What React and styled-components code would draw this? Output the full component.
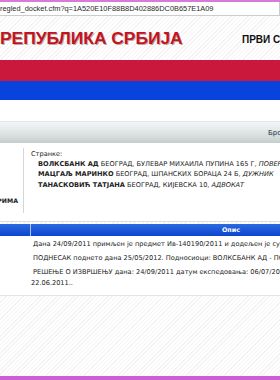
import React from 'react';
import styled, { createGlobalStyle } from 'styled-components';

const Global = createGlobalStyle`
	html, body { margin: 0; padding: 0; background: #fff; }
	body { font-family: "DejaVu Sans", Verdana, sans-serif; }
`;

const Frame = styled.div`
	width: 280px;
	height: 380px;
	overflow: hidden;
	display: flex;
	flex-direction: column;
	border-top: 2px solid #d77ad8;
	border-bottom: 4px solid #cc5fd3;
	box-sizing: border-box;
	background: repeating-linear-gradient(135deg, #ffffff 0 2px, #f3f3f3 2px 3px);
`;

const AddressBar = styled.div`
	height: 13px;
	flex: none;
	background: #fff;
	border-bottom: 1px solid #c9cdd2;
	border-right: 1px solid #c9cdd2;
	font-family: "Liberation Sans", Arial, sans-serif;
	font-size: 7.4px;
	line-height: 13px;
	color: #2a2a2a;
	white-space: nowrap;
	overflow: hidden;
`;

const Header = styled.div`
	height: 44px;
	flex: none;
	display: flex;
	align-items: center;
	justify-content: space-between;
	white-space: nowrap;
	overflow: hidden;
`;

const Title = styled.div`
	font-family: "Liberation Sans", Arial, sans-serif;
	font-weight: bold;
	font-size: 17.4px;
	color: #c0151f;
	text-shadow: 1px 1px 0 rgba(90, 0, 0, 0.35);
	margin-top: 1px;
`;

const Court = styled.div`
	font-family: "Liberation Sans", Arial, sans-serif;
	font-weight: bold;
	font-size: 10px;
	color: #111;
	width: 38px;
	overflow: hidden;
	margin-top: 2px;
`;

const Band = styled.div`
	height: ${p => p.h}px;
	flex: none;
	background: ${p => p.color};
`;

const Toolbar = styled.div`
	height: 21px;
	flex: none;
	border-top: 1px solid #e3e6e6;
	background: linear-gradient(#f3f6f6, #dfe5e5 50%, #c4cdcd);
	display: flex;
	align-items: center;
	justify-content: flex-end;
	overflow: hidden;
	font-size: 7px;
	color: #1d2a44;
`;

const ToolbarText = styled.div`
	width: 12px;
	overflow: hidden;
	white-space: nowrap;
`;

const Parties = styled.div`
	flex: none;
	background: #fff;
	display: grid;
	grid-template-columns: 24px 1fr;
	grid-template-rows: 65px;
	padding: 5px 0 8px;
	border-bottom: 1px solid #dcdcdc;
	font-size: 6.6px;
	color: #222;
`;

const Label = styled.div`
	border-right: 1px solid #d6d6d6;
	display: flex;
	align-items: flex-end;
	justify-content: flex-end;
	overflow: hidden;
	font-weight: bold;
	font-size: 6.2px;
	white-space: nowrap;
	padding: 0 5px 9px 0;
`;

const PartyList = styled.div`
	padding: 2px 0 0 7px;
	display: flex;
	flex-direction: column;
	gap: 2.2px;
	white-space: nowrap;
	overflow: hidden;
`;

const Party = styled.div`
	padding-left: 7px;
	b { font-weight: bold; }
	i { font-style: italic; }
`;

const Table = styled.div`
	flex: none;
	margin-top: 2px;
	background: #fff;
	border-bottom: 1px solid #e4e4e4;
	padding-bottom: 6px;
	width: 431px;
	display: grid;
	grid-template-columns: 30px 401px;
	font-size: 6.6px;
	color: #222;
`;

const HeadCell = styled.div`
	height: 12px;
	background: linear-gradient(#2b6be0, #0c44cf);
	border-left: ${p => (p.first ? 'none' : '1px solid #a9c2f0')};
	color: #fff;
	font-weight: bold;
	font-size: 6.4px;
	display: flex;
	align-items: center;
	justify-content: center;
`;

const Cell = styled.div`
	padding: 3px 0 0 1px;
	text-indent: 2px;
	line-height: 11px;
	white-space: nowrap;
	grid-column: 2;
`;

const rows = [
	'Дана 24/09/2011 примљен је предмет Ив-140190/2011 и додељен је судији',
	'ПОДНЕСАК поднето дана 25/05/2012. Подносиоци: ВОЛКСБАНК АД - ПОВЕРИЛАЦ',
];

export default function App() {
	return (
		<>
			<Global />
			<Frame>
				<AddressBar>regled_docket.cfm?q=1A520E10F88B8D402886DC0B657E1A09</AddressBar>
				<Header>
					<Title>РЕПУБЛИКА СРБИЈА</Title>
					<Court>ПРВИ СУД</Court>
				</Header>
				<Band h={21} color="#c9183b" />
				<Band h={19} color="#0743dc" />
				<Band h={21} color="#fff" />
				<Toolbar>
					<ToolbarText>Број</ToolbarText>
				</Toolbar>
				<Parties>
					<Label>СТРАНКЕ У ПОСТУПКУ ТРИМА</Label>
					<PartyList>
						<div>Странке:</div>
						<Party><b>ВОЛКСБАНК АД</b> БЕОГРАД, БУЛЕВАР МИХАИЛА ПУПИНА 165 Г, <i>ПОВЕРИЛАЦ</i></Party>
						<Party><b>МАЦГАЉ МАРИНКО</b> БЕОГРАД, ШПАНСКИХ БОРАЦА 24 Б, <i>ДУЖНИК</i></Party>
						<Party><b>ТАНАСКОВИЋ ТАТЈАНА</b> БЕОГРАД, КИЈЕВСКА 10, <i>АДВОКАТ</i></Party>
					</PartyList>
				</Parties>
				<Table>
					<HeadCell first />
					<HeadCell>Опис</HeadCell>
					{rows.map(r => (
						<Cell key={r}>{r}</Cell>
					))}
					<Cell>
						РЕШЕЊЕ О ИЗВРШЕЊУ дана: 24/09/2011 датум експедовања: 06/07/2011 Решење
						<br />
						22.06.2011..
					</Cell>
				</Table>
			</Frame>
		</>
	);
}
